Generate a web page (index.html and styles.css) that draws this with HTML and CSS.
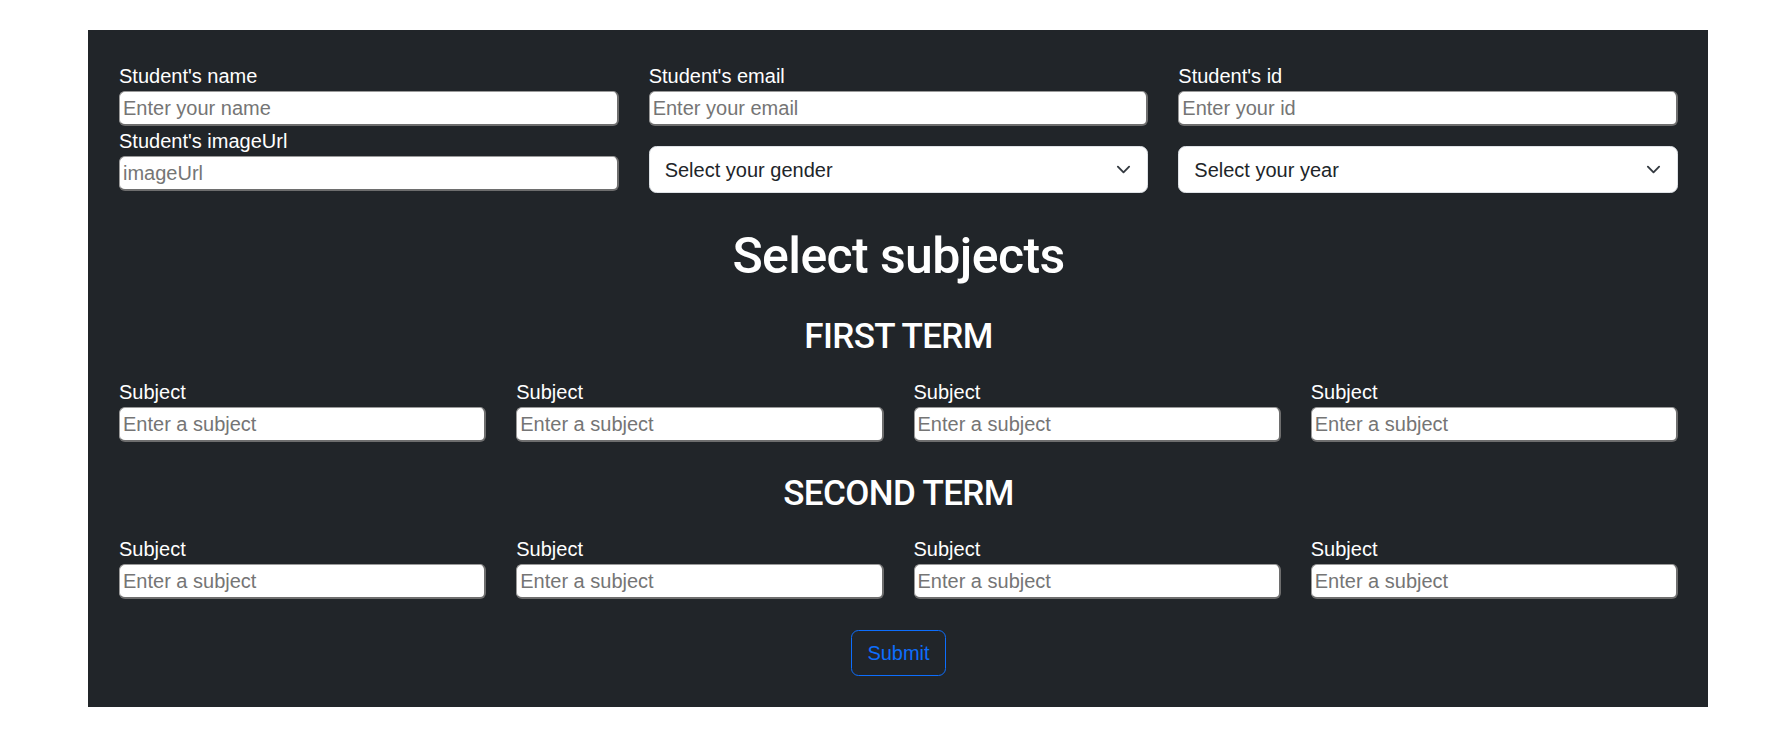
FILE: index.html
```html
<!DOCTYPE html>
<html lang="en">
<head>
<meta charset="utf-8">
<title>Student form</title>
<link rel="stylesheet" href="styles.css">
</head>
<body>
<div class="panel">
  <form class="form">
    <div class="top-grid">
      <div class="col">
        <label class="lbl">Student's name</label>
        <input class="field" type="text" placeholder="Enter your name">
        <label class="lbl">Student's imageUrl</label>
        <input class="field" type="text" placeholder="imageUrl">
      </div>
      <div class="col">
        <label class="lbl">Student's email</label>
        <input class="field" type="text" placeholder="Enter your email">
        <div class="select-wrap">
          <select class="select"><option>Select your gender</option></select>
          <svg class="chev" viewBox="0 0 16 16" width="15" height="15"><path d="m2 5 6 6 6-6" fill="none" stroke="#343a40" stroke-width="2" stroke-linecap="round" stroke-linejoin="round"/></svg>
        </div>
      </div>
      <div class="col">
        <label class="lbl">Student's id</label>
        <input class="field" type="text" placeholder="Enter your id">
        <div class="select-wrap">
          <select class="select"><option>Select your year</option></select>
          <svg class="chev" viewBox="0 0 16 16" width="15" height="15"><path d="m2 5 6 6 6-6" fill="none" stroke="#343a40" stroke-width="2" stroke-linecap="round" stroke-linejoin="round"/></svg>
        </div>
      </div>
    </div>

    <h1 class="title">Select subjects</h1>

    <section class="term">
      <h3 class="term-title">FIRST TERM</h3>
      <div class="subject-grid">
        <div class="col"><label class="lbl">Subject</label><input class="field" type="text" placeholder="Enter a subject"></div>
        <div class="col"><label class="lbl">Subject</label><input class="field" type="text" placeholder="Enter a subject"></div>
        <div class="col"><label class="lbl">Subject</label><input class="field" type="text" placeholder="Enter a subject"></div>
        <div class="col"><label class="lbl">Subject</label><input class="field" type="text" placeholder="Enter a subject"></div>
      </div>
    </section>

    <section class="term term-second">
      <h3 class="term-title">SECOND TERM</h3>
      <div class="subject-grid">
        <div class="col"><label class="lbl">Subject</label><input class="field" type="text" placeholder="Enter a subject"></div>
        <div class="col"><label class="lbl">Subject</label><input class="field" type="text" placeholder="Enter a subject"></div>
        <div class="col"><label class="lbl">Subject</label><input class="field" type="text" placeholder="Enter a subject"></div>
        <div class="col"><label class="lbl">Subject</label><input class="field" type="text" placeholder="Enter a subject"></div>
      </div>
    </section>

    <div class="actions">
      <button class="btn" type="button">Submit</button>
    </div>
  </form>
</div>
</body>
</html>
```

FILE: styles.css
```css
html, body {
  margin: 0;
  padding: 0;
  background: #ffffff;
}

body {
  font-family: "Liberation Sans", Arial, sans-serif;
  font-size: 20px;
  line-height: 30px;
  color: #212529;
}

.panel {
  box-sizing: border-box;
  width: 1620px;
  margin: 30px 0 0 88px;
  padding: 31px 30px 31px 31px;
  background: #212529;
  color: #ffffff;
}

.form {
  margin: 0;
}

.top-grid {
  display: grid;
  grid-template-columns: repeat(3, 1fr);
  column-gap: 30px;
}

.subject-grid {
  display: grid;
  grid-template-columns: repeat(4, 1fr);
  column-gap: 30px;
}

.col {
  display: flex;
  flex-direction: column;
  min-width: 0;
}

.lbl {
  display: block;
  height: 30px;
  line-height: 30px;
  color: #ffffff;
}

.field {
  box-sizing: border-box;
  width: 100%;
  height: 35px;
  margin: 0;
  padding: 0 2px 0 3px;
  border-style: solid;
  border-width: 1px 2px 2px 1px;
  border-color: #9a9a9a #6e6e6e #6e6e6e #9a9a9a;
  border-radius: 6px;
  background: #ffffff;
  font-family: inherit;
  font-size: 20px;
  color: #000000;
  outline: none;
}

.field::placeholder {
  color: #757575;
  opacity: 1;
}

.select-wrap {
  position: relative;
  margin-top: 20px;
}

.select {
  box-sizing: border-box;
  display: block;
  width: 100%;
  height: 47px;
  margin: 0;
  padding: 0 45px 0 15px;
  border: 1px solid #dee2e6;
  border-radius: 7.5px;
  background: #ffffff;
  font-family: inherit;
  font-size: 20px;
  line-height: 30px;
  color: #212529;
  appearance: none;
  -webkit-appearance: none;
}

.chev {
  position: absolute;
  right: 17px;
  top: 16px;
  pointer-events: none;
}

.title {
  margin: 33px 0 30px;
  font-family: Roboto, "Liberation Sans", sans-serif;
  font-weight: 500;
  font-size: 50px;
  line-height: 60px;
  letter-spacing: -0.6px;
  text-align: center;
  color: #ffffff;
}

.term-title {
  margin: 0 0 19px;
  font-family: Roboto, "Liberation Sans", sans-serif;
  font-weight: 500;
  font-size: 35px;
  line-height: 42px;
  letter-spacing: -0.6px;
  text-align: center;
  color: #ffffff;
}

.term-second {
  margin-top: 31px;
}

.actions {
  display: flex;
  justify-content: center;
  margin-top: 31px;
}

.btn {
  box-sizing: border-box;
  height: 46px;
  padding: 0 15px;
  border: 1px solid #0d6efd;
  border-radius: 7.5px;
  background: transparent;
  font-family: inherit;
  font-size: 20px;
  line-height: 44px;
  color: #0d6efd;
  cursor: pointer;
}
```
